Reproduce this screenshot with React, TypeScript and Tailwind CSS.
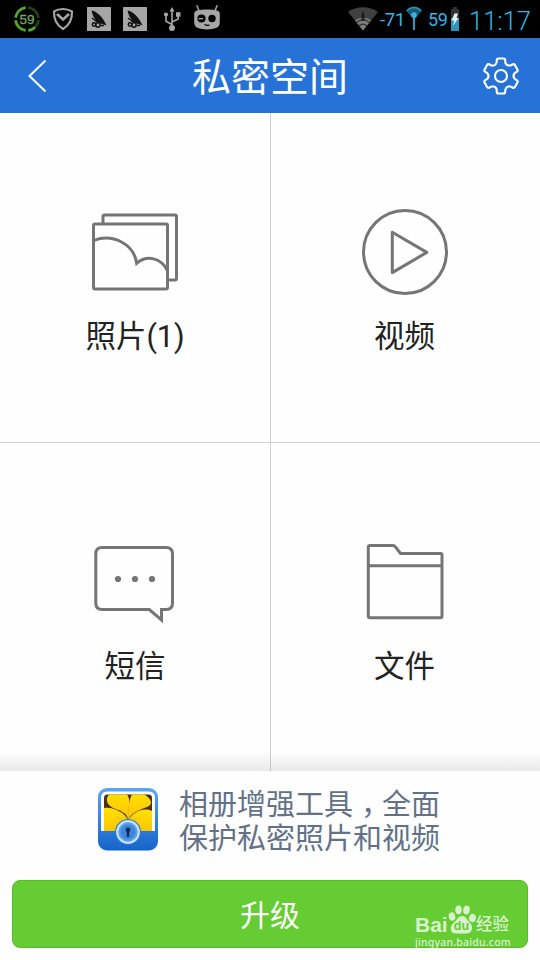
import type { ReactNode } from "react";

const CleanerIcon = () => (
    <svg width="24" height="24" viewBox="0 0 24 24">
        <rect width="24" height="24" fill="#a6a6a6" rx="0.5" />
        <path d="M4.500 3.500C10 4.500 16 10 19.500 18.500C15.500 16.800 13 16.500 10 15C7 11 5.500 8 4.500 3.500Z" fill="#111" />
        <path d="M5 11L10 15" stroke="#111" strokeWidth="1.200" />
        <g fill="none" stroke="#111" strokeWidth="1.500">
            <circle cx="7" cy="17.500" r="1.700" />
            <circle cx="11" cy="18" r="2.200" />
            <path d="M14 18.500h3" />
        </g>
    </svg>
);

const StatusBar = () => (
    <div className="flex h-[38px] items-center bg-black pr-[9px] pl-[14px] text-[#33b5e5]">
        <svg width="26" height="26" viewBox="0 0 26 26">
            <circle cx="13" cy="13" r="11.500" fill="none" stroke="#1f4413" strokeWidth="2.600" />
            <path d="M14.500 24.400A11.500 11.500 0 0 0 21 21.200M11.500 24.400A11.500 11.500 0 0 1 1.600 14.500M1.600 11.500A11.500 11.500 0 0 1 11.500 1.600" fill="none" stroke="#55a630" strokeWidth="2.600" />
            <path d="M13 0v3M13 23v3M0 13h3M23 13h3" stroke="#000" strokeWidth="2" />
            <text x="13" y="17.700" textAnchor="middle" fontSize="13.500" fontWeight="500" fontFamily="Liberation Sans, sans-serif" fill="#74a95d" stroke="#74a95d" strokeWidth="0.300">59</text>
        </svg>
        <svg className="ml-[12px]" width="22" height="24" viewBox="0 0 22 24" fill="none" stroke="#a6a6a6">
            <path d="M11 2C14 2 17.500 2.900 20 4.400C20.300 12.500 16.500 18.800 11 22C5.500 18.800 1.700 12.500 2 4.400C4.500 2.900 8 2 11 2Z" strokeWidth="2.200" strokeLinejoin="round" />
            <path d="M5 7L11 12.500L17 7" strokeWidth="2.600" />
        </svg>
        <div className="ml-[13px] flex gap-3">
            <CleanerIcon />
            <CleanerIcon />
        </div>
        <svg className="ml-[16px]" width="18" height="24" viewBox="0 0 18 24" fill="none" stroke="#a6a6a6" strokeWidth="1.600">
            <path d="M9 3v18M9 17.500L3 14.200V8M9 15L15.200 12V8" />
            <path d="M9 0L11.500 4.500h-5z" fill="#a6a6a6" stroke="none" />
            <circle cx="9" cy="21" r="3" fill="#a6a6a6" stroke="none" />
            <circle cx="3" cy="7.500" r="2.100" fill="#a6a6a6" stroke="none" />
            <path d="M13 5.200h4.500v4.500h-4.500z" fill="#a6a6a6" stroke="none" />
        </svg>
        <svg className="mb-[4px] ml-[13px]" width="26" height="25" viewBox="0 0 26 25">
            <path d="M3 0.800L5.500 7M23 0.800L20.500 7" stroke="#a6a6a6" strokeWidth="1.500" strokeLinecap="round" />
            <path d="M3 5.500C9 4.300 17 4.300 23 5.500Q25.800 6 25.800 9V17Q25.800 21.500 22.500 22.800C17 25 9 25 3.500 22.800Q0.200 21.500 0.200 17V9Q0.200 6 3 5.500Z" fill="#a6a6a6" />
            <circle cx="7.500" cy="13.500" r="4.100" fill="#000" />
            <path d="M4.500 13h4.500v1.300h-4.500z" fill="#a6a6a6" />
            <circle cx="18" cy="13.500" r="3.700" fill="#000" />
            <path d="M10.500 19.600C12 20.600 14 20.400 15.500 20.200" fill="none" stroke="#000" strokeWidth="1.200" />
        </svg>
        <svg className="ml-auto" width="30" height="24" viewBox="0 0 30 24">
            <path d="M15 23.500L0 5C8 -1.200 22 -1.200 30 5Z" fill="#404040" />
            <path d="M15 4L10.500 17h9z" fill="#1c1c1c" />
            <path d="M15 23.500L7 13.500C12 9.500 18 9.500 23 13.500Z" fill="#7d7d7d" />
            <path d="M15 7L12.500 14h5z" fill="#222" />
            <path d="M8.500 15.500C12.500 12 17.500 12 21.500 15.500M11 19C13.500 16.500 16.500 16.500 19 19" fill="none" stroke="#333" strokeWidth="1.200" />
        </svg>
        <span className="ml-[2px] w-[25px] pt-[2px] text-[18.500px] leading-6 tracking-[-0.300px] whitespace-nowrap">-71</span>
        <svg className="mb-[2px] ml-[1px]" width="16" height="24" viewBox="0 0 16 24">
            <path d="M8 14L0 4.500C4 -0.800 12 -0.800 16 4.500Z" fill="#1b5a72" />
            <path d="M1 5C4.500 0.600 11.500 0.600 15 5" fill="none" stroke="#2d9fc9" strokeWidth="1.200" />
            <circle cx="8" cy="9" r="2.800" fill="#33b5e5" />
            <path d="M8 9v15" stroke="#33b5e5" strokeWidth="1.700" />
        </svg>
        <span className="ml-[6px] w-[20px] pt-[2px] text-[18px] leading-6 tracking-[-0.300px]">59</span>
        <svg className="ml-[3px]" width="8" height="24" viewBox="0 0 8 24">
            <path d="M2 0h4v2h2v9H0V2h2z" fill="#333" />
            <path d="M0 11h8v13H0z" fill="#2f94bb" />
            <path d="M3.500 6.500H7L5.500 11H7.500L2 19L3.200 13.500H0.500Z" fill="#e5f3f8" />
        </svg>
        <span className="ml-[10px] w-[62px] pt-[3px] text-[25.500px] leading-8 font-light whitespace-nowrap">11:17</span>
    </div>
);

const gearTooth = "M-4.500 -12.700C-4.500 -13.800 -4.200 -14.200 -4.200 -15.700Q-4.200 -17.500 -2.500 -17.500H2.500Q4.200 -17.500 4.200 -15.700C4.200 -14.200 4.500 -13.800 4.500 -12.700C5.200 -11.200 7 -10.300 8.750 -10.250";

const Header = () => (
    <header className="flex h-[75px] items-center bg-[#2772d6] pr-[20px] pl-[28px] text-white">
        <svg width="38" height="34" viewBox="0 0 38 34" fill="none" stroke="#fff" strokeWidth="2">
            <path d="M17.500 1.500L1.500 17L17.500 32.500" />
        </svg>
        <h1 className="grow pt-[4px] pr-[8px] text-center text-[39px] leading-[60px]">私密空间</h1>
        <svg width="38" height="38" viewBox="-19 -19 38 38" fill="none" stroke="#fff" strokeWidth="2.100">
            {[0, 60, 120, 180, 240, 300].map((angle) => (
                <path key={angle} d={gearTooth} transform={`rotate(${angle})`} />
            ))}
            <circle r="6" />
        </svg>
    </header>
);

const tiles: { label: string; className: string; icon: ReactNode }[] = [
    {
        label: "照片(1)",
        className: "border-r border-b",
        icon: (
            <>
                <path d="M12 15V8.500Q12 7 13.500 7H84Q85.500 7 85.500 8.500V70.500Q85.500 72 84 72H78" />
                <rect x="2.500" y="16" width="74" height="65" rx="1.500" />
                <path d="M3 32.300C22 25.500 43 36 45.700 55.300C56 46.500 70 50 76 62" />
            </>
        ),
    },
    {
        label: "视频",
        className: "border-b pr-[2px]",
        icon: (
            <>
                <circle cx="44" cy="44" r="41.500" />
                <path d="M31.300 24.200V64.600L65.800 44.400Z" strokeLinejoin="round" />
            </>
        ),
    },
    {
        label: "短信",
        className: "border-r",
        icon: (
            <>
                <path d="M11 9.500H75Q81.500 9.500 81.500 16V65Q81.500 71.500 75 71.500H70.500V82L58.300 71.500H11Q4.800 71.500 4.800 65V16Q4.800 9.500 11 9.500Z" />
                <g fill="#757575" stroke="none">
                    <circle cx="27" cy="41" r="3.100" />
                    <circle cx="44" cy="41" r="3.100" />
                    <circle cx="61" cy="41" r="3.100" />
                </g>
            </>
        ),
    },
    {
        label: "文件",
        className: "pr-[2px]",
        icon: (
            <path d="M7.300 27.700H80.700M9 7.500H32Q33.500 7.500 34.500 9L39.500 15.500H79.500Q81 15.500 81 17V78Q81 79.700 79.500 79.700H9Q7.300 79.700 7.300 78V9Q7.300 7.500 9 7.500Z" />
        ),
    },
];

const Promo = () => (
    <section className="relative h-[189px] bg-[#fefefe] px-3 pt-[16px]">
        <div className="absolute inset-x-0 -top-[21px] h-[21px] bg-linear-to-b from-transparent to-black/8" />
        <div className="flex h-[64px] pl-[85px]">
            <svg className="mt-px shrink-0" width="62" height="63" viewBox="0 0 62 63">
                <defs>
                    <linearGradient id="frame" x1="0" y1="0" x2="0" y2="1">
                        <stop offset="0" stopColor="#5aa5f8" />
                        <stop offset="1" stopColor="#1464c8" />
                    </linearGradient>
                    <linearGradient id="petal" x1="0" y1="0" x2="0" y2="1">
                        <stop offset="0" stopColor="#ffe100" />
                        <stop offset="1" stopColor="#ffc400" />
                    </linearGradient>
                    <clipPath id="photo">
                        <path d="M7 10Q7 6.500 10 6.500H52Q55 6.500 55 10V43H7Z" />
                    </clipPath>
                </defs>
                <rect x="1" width="60" height="62.500" rx="9" fill="url(#frame)" />
                <path d="M4 10Q4 3.500 10 3.500H52Q58 3.500 58 10V43H4Z" fill="#fff" />
                <g clipPath="url(#photo)">
                    <path d="M7 6h48v37H7z" fill="#50301c" />
                    <g fill="url(#petal)">
                        <path d="M31 31C29 20 12 23 10 13C9 6 17 2 24 3C31 4 32 10 32.500 14Z" />
                        <path d="M31 31C31 22 32 10 36 5C44 3 54 9 54 15C53 21 40 19 31 31Z" />
                        <path d="M31 32C27 24 14 17 3 21V44H22Z" />
                        <path d="M31 32C36 24 48 18 57 24V44H31Z" />
                    </g>
                    <path d="M31 33L23 21M31 33L32 18M31 33L41 23M31 33L19 29M31 33L43 30" stroke="#f0b000" strokeWidth="0.600" />
                </g>
                <circle cx="31" cy="44" r="13" fill="#2376d8" />
                <circle cx="31" cy="44" r="10.800" fill="#5a9ee8" stroke="#c3e0fc" strokeWidth="2.200" />
                <circle cx="31" cy="44" r="7.500" fill="#4086dc" />
                <circle cx="31" cy="41.800" r="2.400" fill="#0b2b55" />
                <path d="M29.800 42h2.400v7h-2.400z" fill="#0b2b55" />
            </svg>
            <p className="mt-px ml-[20px] text-[29px] leading-[34px] whitespace-nowrap text-[#637187]">
                相册增强工具<span className="pr-[6.500px] pl-[8px] [font-feature-settings:'halt']">，</span>全面<br />
                保护私密照片和视频
            </p>
        </div>
        <button className="mt-[29px] flex h-[68px] w-full items-center justify-center rounded-lg border border-[#5abb2c] bg-[#66cc33] pt-[2px] text-[30px] text-white">
            升级
        </button>
        <div className="absolute right-[27px] bottom-[12px] w-[98px] text-white/75">
            <div className="flex h-[31px] items-end">
                <span className="w-[33px] font-['Liberation_Sans',sans-serif] text-[21px] leading-[24px] font-bold">Bai</span>
                <svg className="mb-[3px]" width="28" height="29" viewBox="0 0 28 29" fill="currentColor">
                    <ellipse cx="4" cy="11.500" rx="3.200" ry="4.200" transform="rotate(-15 4 11.500)" />
                    <ellipse cx="10.500" cy="4.800" rx="3.200" ry="4.400" />
                    <ellipse cx="18.500" cy="5" rx="3.200" ry="4.400" transform="rotate(12 18.500 5)" />
                    <ellipse cx="24.500" cy="13" rx="3.300" ry="4.200" transform="rotate(12 24.500 13)" />
                    <path d="M14 11C18 11 19 15 22 18C26 22 24 28.500 18.500 28.500H8C2 28.500 1 22 5.500 18C9 15 10 11 14 11Z" />
                    <text x="13.500" y="25" textAnchor="middle" fontSize="12.500" fontWeight="700" fontFamily="Liberation Sans, sans-serif" fill="#66cc33">du</text>
                </svg>
                <span className="text-[16.500px] leading-[24px] font-medium">经验</span>
            </div>
            <div className="font-['Noto_Sans',sans-serif] text-[10.500px] leading-[11px] font-medium tracking-[0.200px]">jingyan.baidu.com</div>
        </div>
    </section>
);

const App = () => {
    return (
        <div className="h-[960px] w-[540px] overflow-hidden bg-[#fefefe] font-[Roboto,'Noto_Sans_CJK_SC',sans-serif]">
            <StatusBar />
            <Header />
            <main className="grid grid-cols-[271px_269px] grid-rows-[330px_328px]">
                {tiles.map(({ label, className, icon }) => (
                    <div key={label} className={`flex flex-col items-center border-[#d0d0d0] pt-[95px] ${className}`}>
                        <svg width="88" height="88" viewBox="0 0 88 88" fill="none" stroke="#757575" strokeWidth="3">
                            {icon}
                        </svg>
                        <span className="mt-[21px] text-[30.500px] leading-[40px] text-[#222]">{label}</span>
                    </div>
                ))}
            </main>
            <Promo />
        </div>
    );
};

export default App;
